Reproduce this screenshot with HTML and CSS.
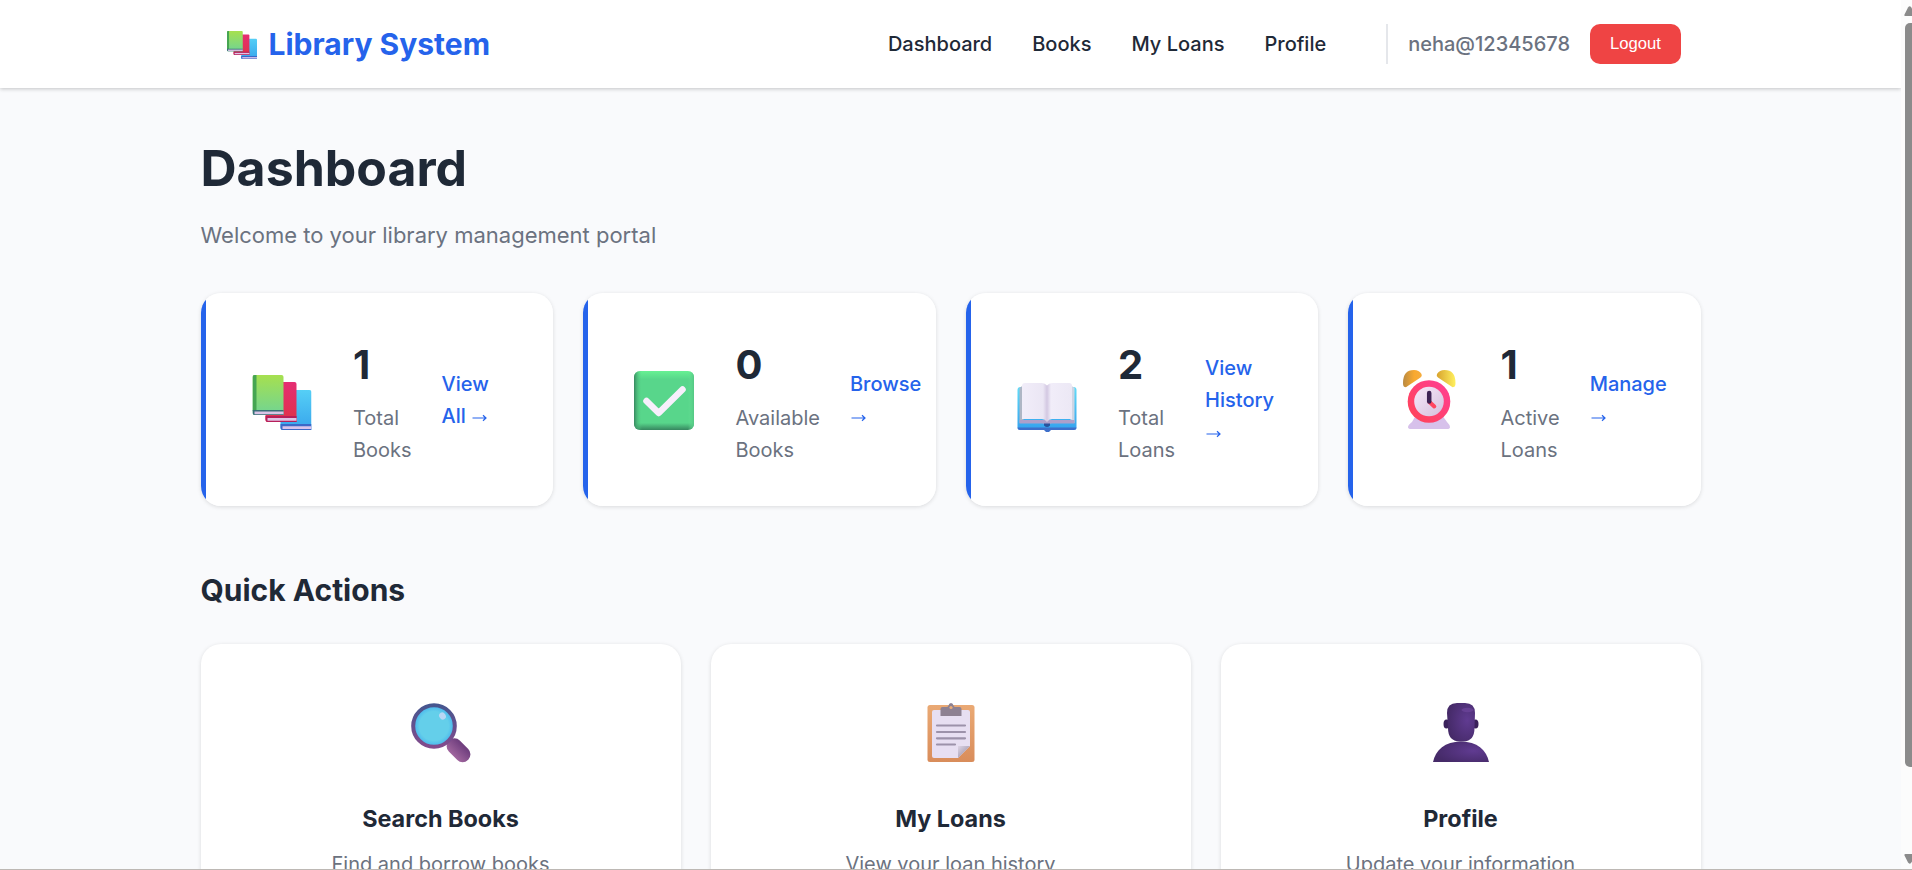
FILE: index.html
```html
<!DOCTYPE html>
<html lang="en">
<head>
<meta charset="utf-8">
<title>Library System</title>
<link rel="stylesheet" href="styles.css">
</head>
<body>
<svg class="defs" width="0" height="0" aria-hidden="true">
  <defs>
    <linearGradient id="green" x1="0" y1="0" x2="0" y2="1"><stop offset="0" stop-color="#a6e04f"/><stop offset="1" stop-color="#70d494"/></linearGradient>
    <linearGradient id="red" x1="0" y1="0" x2="0" y2="1"><stop offset="0" stop-color="#e52d73"/><stop offset="1" stop-color="#df3348"/></linearGradient>
    <linearGradient id="blue" x1="0" y1="0" x2="0" y2="1"><stop offset="0" stop-color="#55cff6"/><stop offset="1" stop-color="#38a5ec"/></linearGradient>
    <linearGradient id="page" x1="0" x2="1"><stop offset="0" stop-color="#f1edf9"/><stop offset=".42" stop-color="#ebe6f4"/><stop offset=".5" stop-color="#d3c8e2"/><stop offset=".58" stop-color="#f1edf9"/><stop offset="1" stop-color="#ece8f5"/></linearGradient>
    <linearGradient id="cover" x1="0" y1="0" x2="0" y2="1"><stop offset="0" stop-color="#62dcf8"/><stop offset="1" stop-color="#34a2ee"/></linearGradient>
    <linearGradient id="bellL" x1="0" x2="1"><stop offset="0" stop-color="#b98a42"/><stop offset=".6" stop-color="#f9a92f"/><stop offset="1" stop-color="#f5ac3e"/></linearGradient>
    <linearGradient id="bellR" x1="0" x2="1"><stop offset="0" stop-color="#d8a32e"/><stop offset="1" stop-color="#fff05e"/></linearGradient>
    <linearGradient id="ring" x1="1" y1="0" x2="0" y2="1"><stop offset="0" stop-color="#ff3f96"/><stop offset="1" stop-color="#ff4353"/></linearGradient>
    <linearGradient id="face" x1="0" y1="0" x2="1" y2="1"><stop offset="0" stop-color="#f7e9fa"/><stop offset="1" stop-color="#d5bfdc"/></linearGradient>
    <linearGradient id="rim" x1="0" y1="0" x2="0" y2="1"><stop offset="0" stop-color="#46568f"/><stop offset="1" stop-color="#834b8c"/></linearGradient>
    <radialGradient id="lens"><stop offset=".7" stop-color="#64cfea"/><stop offset="1" stop-color="#45b2ee"/></radialGradient>
    <linearGradient id="handle" x1="0" y1="0" x2="0" y2="1"><stop offset=".1" stop-color="#71407f"/><stop offset="1" stop-color="#a0669e"/></linearGradient>
    <linearGradient id="check" x1="0" y1="0" x2="0" y2="1"><stop offset="0" stop-color="#67f193"/><stop offset=".14" stop-color="#58d68b"/><stop offset=".88" stop-color="#58d68b"/><stop offset="1" stop-color="#36865f"/></linearGradient>
    <linearGradient id="checkside" x1="0" x2="1"><stop offset="0" stop-color="#37885f"/><stop offset=".13" stop-color="#58d68b" stop-opacity="0"/><stop offset=".9" stop-color="#68e397" stop-opacity="0"/><stop offset="1" stop-color="#55c784"/></linearGradient>
    <linearGradient id="board" x1="0" y1="0" x2="0" y2="1"><stop offset="0" stop-color="#eaa974"/><stop offset="1" stop-color="#d98d5b"/></linearGradient>
    <linearGradient id="fold" x1="0" y1="0" x2="1" y2="1"><stop offset="0" stop-color="#ddd5e6"/><stop offset=".5" stop-color="#b5acc0"/></linearGradient>
    <radialGradient id="person" cx=".72" cy=".45" r=".7"><stop offset="0" stop-color="#603b91"/><stop offset="1" stop-color="#452a68"/></radialGradient>
    <symbol id="books" viewBox="0 0 59 55">
      <path d="M28 17q0-2 2-2h27q2 0 2 2v38H30q-2 0-2-2z" fill="url(#blue)"/>
      <path d="M28 49h31v6H30q-2 0-2-3z" fill="#3b68c7"/><path d="M30 51.3h29v2.7H30z" fill="#d9c4ec"/>
      <path d="M13 9q0-2 2-2h27q2 0 2 2v38H15q-2 0-2-2z" fill="url(#red)"/>
      <path d="M13 41h31v6H15q-2 0-2-3z" fill="#b71f5a"/><path d="M15 43h29v2.7H15z" fill="#e0c3e5"/>
      <path d="M0 2q0-2 2-2h27q2 0 2 2v38H2q-2 0-2-2z" fill="url(#green)"/>
      <path d="M0 2q0-2 2-2h2v36H0z" fill="#46a552"/><path d="M0 35h31v5H2q-2 0-2-3z" fill="#376e76"/><path d="M2 36.5h29v2.7H2z" fill="#d9c4e6"/>
    </symbol>
  </defs>
</svg>

<div class="window">
  <div class="viewport">
    <header class="navbar">
      <div class="navbar-inner">
        <a class="brand"><svg class="brand-icon" viewBox="0 0 59 55"><use href="#books"/></svg><span>Library System</span></a>
        <div class="menu">
          <nav class="links"><a>Dashboard</a><a>Books</a><a>My Loans</a><a>Profile</a></nav>
          <div class="account"><span class="username">neha@12345678</span><button class="logout">Logout</button></div>
        </div>
      </div>
    </header>

    <main class="content">
      <h1 class="title">Dashboard</h1>
      <p class="subtitle">Welcome to your library management portal</p>

      <section class="stats">
        <article class="stat">
          <svg class="stat-icon" viewBox="0 0 79 96"><use href="#books" x="9.5" y="24" width="59" height="55"/></svg>
          <div class="stat-text"><div class="number">1</div><div class="label">Total<br>Books</div></div>
          <a class="stat-link">View<br>All <svg class="arrow" viewBox="0 0 18 10"><path d="M1.500 5H15M12 2.300l3 2.700-3 2.700"/></svg></a>
        </article>
        <article class="stat">
          <svg class="stat-icon" viewBox="0 0 79 96">
            <rect x="9" y="20" width="60" height="59" rx="6" fill="url(#check)"/><rect x="9" y="20" width="60" height="59" rx="6" fill="url(#checkside)"/>
            <path d="M21.500 50L33.700 62 57.500 38.500" fill="none" stroke="#f8effc" stroke-width="6.500" stroke-linecap="round" stroke-linejoin="round"/>
          </svg>
          <div class="stat-text"><div class="number">0</div><div class="label">Available<br>Books</div></div>
          <a class="stat-link">Browse<br><svg class="arrow" viewBox="0 0 18 10"><path d="M1.500 5H15M12 2.300l3 2.700-3 2.700"/></svg></a>
        </article>
        <article class="stat">
          <svg class="stat-icon" viewBox="0 0 79 96">
            <rect x="9.500" y="36" width="59" height="43" rx="3" fill="url(#cover)"/>
            <path d="M9.500 76.500q0 2.500 3 2.500H36l2 2h3l2-2h22.500q3 0 3-2.500z" fill="#3e6fca"/>
            <path d="M11.500 37l4-3v38h-4z" fill="#aeb6c5"/><path d="M66.500 37l-4-3v38h4z" fill="#cdd5e4"/>
            <path d="M11.500 69h55v3.500H44q-3 0-5 2-2-2-5-2H11.500z" fill="#ad9fca"/>
            <path d="M14 35q0-3 3-3h17q3 0 5 2.500 2-2.500 5-2.500h17q3 0 3 3v33H44q-3 0-5 3-2-3-5-3H14z" fill="url(#page)"/>
            <path d="M36 72.500h6v2q-3 3-6 0z" fill="#28539e"/>
          </svg>
          <div class="stat-text"><div class="number">2</div><div class="label">Total<br>Loans</div></div>
          <a class="stat-link">View<br>History<br><svg class="arrow" viewBox="0 0 18 10"><path d="M1.500 5H15M12 2.300l3 2.700-3 2.700"/></svg></a>
        </article>
        <article class="stat">
          <svg class="stat-icon" viewBox="-4 0 79 96">
            <path d="M22 64L18 71q-4 3-4 5 0 2 3 2h36q3 0 3-2 0-2-3-5l-5-7z" fill="#d7c1eb"/>
            <path d="M11 36q-2 0-2-4 0-13 11-13 5 0 7.500 4 1 2-1 3.500L13 35.500q-1 1-2 .5z" fill="url(#bellL)"/>
            <path d="M59.500 36q2 0 2-4 0-13-11-13-5 0-7.500 4-1 2 1 3.500L57.500 35.500q1 1 2 .5z" fill="url(#bellR)"/>
            <circle cx="35" cy="50.500" r="21.300" fill="url(#ring)"/><circle cx="35" cy="50.500" r="14.800" fill="url(#face)"/>
            <path d="M35.500 51l4.800 4.500" stroke="#ff4660" stroke-width="4" stroke-linecap="round"/><path d="M35.200 42v8.500" stroke="#3d2354" stroke-width="4.500" stroke-linecap="round"/>
          </svg>
          <div class="stat-text"><div class="number">1</div><div class="label">Active<br>Loans</div></div>
          <a class="stat-link">Manage<br><svg class="arrow" viewBox="0 0 18 10"><path d="M1.500 5H15M12 2.300l3 2.700-3 2.700"/></svg></a>
        </article>
      </section>

      <h2 class="section-title">Quick Actions</h2>
      <section class="actions">
        <article class="action">
          <svg class="action-icon" viewBox="0 0 60 60">
            <rect x="34" y="39.500" width="27" height="15.500" rx="7.500" transform="rotate(45 47.500 47.300)" fill="url(#handle)"/>
            <circle cx="23" cy="23" r="20.800" fill="url(#lens)" stroke="url(#rim)" stroke-width="4"/>
            <ellipse cx="31.500" cy="13" rx="3.200" ry="3.700" transform="rotate(-35 31.500 13)" fill="#b9d7f4"/>
          </svg>
          <h3 class="action-title">Search Books</h3><p class="action-text">Find and borrow books</p>
        </article>
        <article class="action">
          <svg class="action-icon" viewBox="0 0 60 60">
            <rect x="6.500" y="2" width="47" height="57" rx="2.500" fill="url(#board)"/>
            <path d="M13 7h34q2 0 2 2v34L37 55H13q-2 0-2-2V9q0-2 2-2z" fill="#e7dff2"/>
            <path d="M37 43h12L37 55z" fill="url(#fold)"/>
            <path d="M19.500 13V6q0-2 2-2h4q1.500 0 2-1.500Q28 0 30 0t2.500 2.500Q33 4 34.500 4h4q2 0 2 2v7z" fill="#8d8192"/><circle cx="30" cy="4.500" r="1.600" fill="#e9ab78"/>
            <path d="M16 22.500h28M16 29h28M16 35.300h28M16 41.500h18" stroke="#9c92aa" stroke-width="2.200" stroke-linecap="round"/>
          </svg>
          <h3 class="action-title">My Loans</h3><p class="action-text">View your loan history</p>
        </article>
        <article class="action">
          <svg class="action-icon" viewBox="0 0 60 60">
            <ellipse cx="15.500" cy="21" rx="3" ry="4.500" fill="#3b225b"/><ellipse cx="44.500" cy="21" rx="3" ry="4.500" fill="#3b225b"/>
            <path d="M2 59C4.500 47 14 38.500 30 38.500S55.500 47 58 59z" fill="url(#person)"/>
            <path d="M16 10Q16 0 26 0h8q10 0 10 10l-.5 15q0 13-11 13.500h-4Q17 38 17 25z" fill="url(#person)"/>
            <ellipse cx="36.500" cy="7" rx="6" ry="2.200" fill="#6d469b" opacity=".7"/>
          </svg>
          <h3 class="action-title">Profile</h3><p class="action-text">Update your information</p>
        </article>
      </section>
    </main>
  </div>
  <div class="scrollbar">
    <svg class="scroll-arrow" viewBox="0 0 8 10"><path d="M1.500 10Q0 10 .5 8.500L4 1.500Q5.500-.5 7 1l1 1.500V10z"/></svg>
    <div class="thumb"></div>
    <svg class="scroll-arrow" viewBox="0 0 8 10"><path d="M1.500 0Q0 0 .5 1.500L4 8.500Q5.500 10.500 7 9l1-1.500V0z"/></svg>
  </div>
</div>
</body>
</html>
```
FILE: styles.css
```css
* { box-sizing: border-box; }
body, h1, h2, h3, p { margin: 0; }
body {
  font-family: Inter, "Liberation Sans", sans-serif;
  font-size: 20px;
  line-height: 32px;
  color: #1f2937;
  overflow: hidden;
}
.defs { display: block; }
.window {
  display: grid;
  grid-template-columns: 1901px 11px;
  height: 870px;
  overflow: hidden;
  border-bottom: 1px solid #bdb8b4;
}
.viewport { height: 869px; overflow: hidden; background: #f9fafc; }

.navbar { height: 88px; background: #fff; box-shadow: 0 1px 4px rgba(0, 0, 0, .22); }
.navbar-inner {
  width: 1500px;
  height: 88px;
  margin-left: 201px;
  padding: 0 20px 0 25.5px;
  display: flex;
  align-items: center;
  justify-content: space-between;
}
.brand { display: flex; align-items: center; gap: 12px; font-size: 30px; font-weight: 700; color: #2563eb; }
.brand-icon { width: 30px; height: 28px; margin-top: 2px; }
.menu { display: flex; align-items: center; gap: 60px; }
.links { display: flex; gap: 40px; font-weight: 500; }
.account { display: flex; align-items: center; gap: 20px; height: 40px; padding-left: 20px; border-left: 2px solid #e5e7eb; }
.username { color: #6b7280; font-weight: 500; }
.logout {
  width: 91px;
  height: 40px;
  padding: 0;
  border: 0;
  border-radius: 10px;
  background: #ef4444;
  color: #fff;
  font: 500 16.67px "Liberation Sans", Arial, sans-serif;
}

.content { width: 1500px; margin-left: 200.5px; padding-top: 40px; }
.title { font-size: 50px; line-height: 80px; font-weight: 700; }
.subtitle { margin-top: 10px; font-size: 22px; line-height: 35px; color: #6b7280; }

.stats { display: grid; grid-template-columns: repeat(4, 1fr); gap: 30px; margin-top: 40px; }
.stat {
  display: flex;
  align-items: center;
  gap: 30px;
  height: 213px;
  padding-left: 42.5px;
  background: linear-gradient(to right, #2563eb 5px, #fff 5px);
  border-radius: 20px;
  box-shadow: 0 1px 4px rgba(0, 0, 0, .13);
}
.stat-icon { flex: none; width: 79px; height: 96px; margin: -2px 1.5px 0 -.5px; }
.number { margin-bottom: 5px; font-size: 40px; line-height: 64px; font-weight: 700; }
.label { color: #6b7280; }
.stat-link { color: #2563eb; font-weight: 500; white-space: nowrap; }
.arrow { width: 18px; height: 10px; vertical-align: 0; fill: none; stroke: #2563eb; stroke-width: 1.2; }

.section-title { margin-top: 60px; font-size: 30px; line-height: 48px; font-weight: 700; }
.actions { display: grid; grid-template-columns: repeat(3, 1fr); gap: 30px; margin-top: 30px; }
.action {
  display: flex;
  flex-direction: column;
  align-items: center;
  height: 290px;
  padding-top: 59px;
  background: #fff;
  border-radius: 20px;
  box-shadow: 0 1px 4px rgba(0, 0, 0, .13);
}
.action-icon { width: 60px; height: 60px; }
.action-title { margin-top: 37px; font-size: 23.4px; line-height: 38px; font-weight: 700; }
.action-text { margin-top: 10px; color: #6b7280; }

.scrollbar { display: flex; flex-direction: column; align-items: flex-end; padding: 6px 0; background: #fcfcfc; }
.scroll-arrow { flex: none; width: 8px; height: 10px; fill: #8b8b8b; }
.thumb { flex: none; width: 7px; height: 744px; margin: 7px 0 87px; border-radius: 5px 0 0 5px; background: #8b8b8b; }
```
